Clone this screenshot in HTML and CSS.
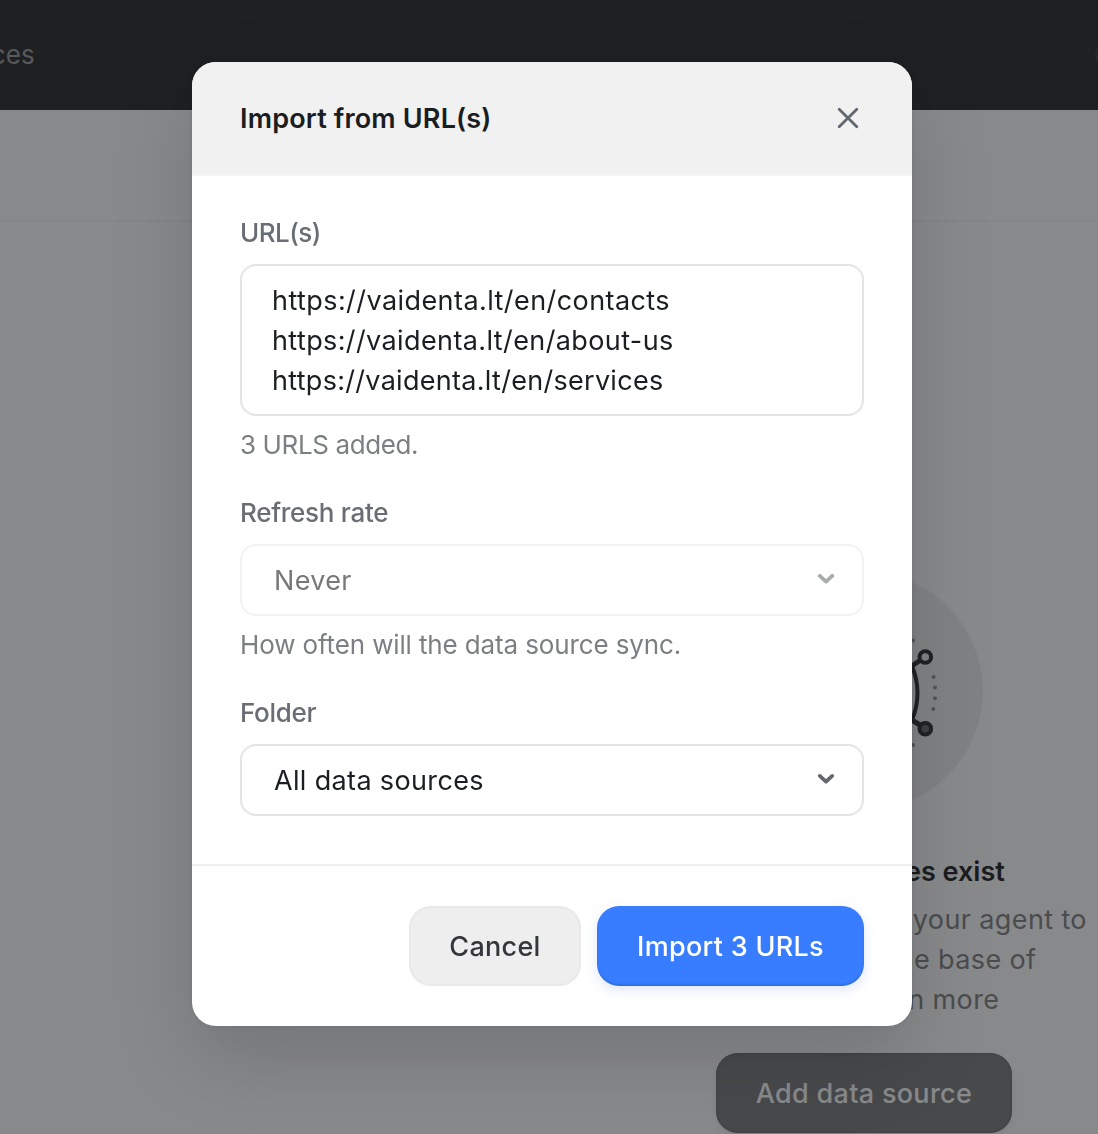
FILE: index.html
```html
<!DOCTYPE html>
<html lang="en">
<head>
    <meta charset="UTF-8">
    <title>Data sources</title>
    <link rel="stylesheet" href="styles.css">
</head>
<body>
    <div class="page">
        <header class="topbar">
            <a class="nav-link">Data sources</a>
            <span class="avatar"></span>
        </header>
        <div class="subheader"></div>
        <main class="empty-state">
            <div class="illustration">
                <svg width="238" height="238" viewBox="1 1 238 238" fill="none">
                    <path d="M168 95Q179 122 168 149" stroke="#25282c" stroke-width="4"/>
                    <path d="M167 95.5L176 89.5M167 148.5L176 154" stroke="#25282c" stroke-width="5"/>
                    <circle cx="181.3" cy="86" r="5.8" stroke="#25282c" stroke-width="4"/>
                    <circle cx="181.3" cy="157.8" r="5.8" fill="#696969" stroke="#25282c" stroke-width="4"/>
                    <g fill="#8a9795">
                        <circle cx="169" cy="69.6" r="2"/>
                        <circle cx="189.6" cy="106" r="2"/>
                        <circle cx="191" cy="116.6" r="2"/>
                        <circle cx="191" cy="127.3" r="2"/>
                        <circle cx="189.3" cy="138" r="2"/>
                        <circle cx="169" cy="174" r="2"/>
                    </g>
                </svg>
            </div>
            <h2>No data sources exist</h2>
            <p>Add data sources to your agent to<br>build a knowledge base of<br>material. Learn more</p>
            <button class="btn btn-dark">Add data source</button>
        </main>
    </div>

    <div class="backdrop">
        <div class="modal">
            <div class="modal-header">
                <h1>Import from URL(s)</h1>
                <svg class="close" width="24" height="24" viewBox="0 0 24 24" fill="none" stroke="#62686e" stroke-width="2.8" stroke-linecap="round">
                    <path d="M3.2 3.2L20.8 20.8M20.8 3.2L3.2 20.8"/>
                </svg>
            </div>
            <div class="modal-body">
                <div class="field">
                    <label class="label-urls">URL(s)</label>
                    <div class="textarea">
                        <div class="url-contacts">https://vaidenta.lt/en/contacts</div>
                        <div class="url-about">https://vaidenta.lt/en/about-us</div>
                        <div class="url-services">https://vaidenta.lt/en/services</div>
                    </div>
                    <div class="hint hint-count">3 URLS added.</div>
                </div>
                <div class="field">
                    <label>Refresh rate</label>
                    <div class="select disabled">
                        <span>Never</span>
                        <svg width="18" height="14" viewBox="0 0 18 14" fill="none" stroke="#62686e" stroke-width="3.8" stroke-linecap="round" stroke-linejoin="round">
                            <path d="M2.8 2.9L9 8.6L15.2 2.9"/>
                        </svg>
                    </div>
                    <div class="hint">How often will the data source sync.</div>
                </div>
                <div class="field">
                    <label>Folder</label>
                    <div class="select">
                        <span>All data sources</span>
                        <svg width="18" height="14" viewBox="0 0 18 14" fill="none" stroke="#62686e" stroke-width="3.8" stroke-linecap="round" stroke-linejoin="round">
                            <path d="M2.8 2.9L9 8.6L15.2 2.9"/>
                        </svg>
                    </div>
                </div>
            </div>
            <div class="modal-footer">
                <button class="btn btn-light">Cancel</button>
                <button class="btn btn-primary">Import 3 URLs</button>
            </div>
        </div>
    </div>
</body>
</html>
```

FILE: styles.css
```css
body {
    margin: 0;
    overflow: hidden;
    font-family: Inter, "Open Sans", sans-serif;
    font-size: 27px;
    line-height: 40px;
    color: #1a1d21;
}
h1, h2, p {
    margin: 0;
}
.page {
    height: 1134px;
    overflow: hidden;
    background: #fff;
}
.topbar {
    display: flex;
    align-items: center;
    justify-content: space-between;
    height: 110px;
    overflow: hidden;
    background: #242424;
}
.nav-link {
    margin-left: -128px;
    color: #999;
    font-size: 26px;
    letter-spacing: 0.1px;
}
.avatar {
    width: 48px;
    height: 24px;
    margin-right: -45px;
    border-radius: 12px;
    background: #333;
}
.subheader {
    height: 110px;
    border-bottom: 2px solid #f6f6f6;
}
.empty-state {
    display: flex;
    flex-direction: column;
    align-items: center;
    width: 468px;
    margin-left: 630px;
    padding-top: 350px;
    text-align: center;
}
.illustration {
    width: 238px;
    height: 238px;
    border-radius: 50%;
    background: #eeefef;
}
.empty-state h2 {
    margin-top: 42px;
    font-size: 27px;
    font-weight: 600;
}
.empty-state p {
    margin: 8px 0 33px;
    letter-spacing: 0.38px;
    color: #7e7f80;
    white-space: nowrap;
}
.backdrop {
    position: fixed;
    inset: 0;
    display: flex;
    align-items: flex-start;
    padding: 62px 0 0 192px;
    background: rgba(26, 29, 33, 0.52);
}
.modal {
    width: 720px;
    border-radius: 24px;
    overflow: hidden;
    background: #fff;
    box-shadow: 0 0 4px rgba(0, 0, 0, 0.1), 0 32px 80px rgba(0, 0, 0, 0.15);
}
.modal-header {
    display: flex;
    align-items: center;
    justify-content: space-between;
    height: 112px;
    padding: 0 52px 0 48px;
    background: #f1f1f1;
    border-bottom: 2px solid #f3f3f3;
}
.modal-header h1 {
    padding-top: 2px;
    font-size: 27px;
    font-weight: 600;
    letter-spacing: 0.17px;
}
.modal-body {
    display: flex;
    flex-direction: column;
    gap: 36px;
    padding: 41px 48px 48px;
}
.field {
    display: flex;
    flex-direction: column;
}
.field label {
    margin-bottom: 15px;
    font-size: 26px;
    font-weight: 500;
    line-height: 32px;
    letter-spacing: -0.28px;
    color: #686e74;
}
.field .label-urls {
    letter-spacing: -0.55px;
}
.textarea {
    padding: 15px 30px 13px;
    border: 2px solid #e4e4e5;
    border-radius: 16px;
}
.url-contacts {
    letter-spacing: 0.43px;
}
.url-about {
    letter-spacing: 0.39px;
}
.url-services {
    letter-spacing: 0.29px;
}
.hint {
    margin-top: 13px;
    font-size: 26px;
    line-height: 32px;
    letter-spacing: -0.13px;
    color: #7c7f82;
}
.hint-count {
    letter-spacing: -0.38px;
}
.select {
    display: flex;
    align-items: center;
    justify-content: space-between;
    height: 68px;
    padding: 0 27px 0 32px;
    border: 2px solid #e4e4e5;
    border-radius: 16px;
    letter-spacing: 0.35px;
}
.select span {
    padding-top: 2px;
}
.select.disabled {
    border-color: #f2f2f2;
    color: #76787b;
}
.select.disabled svg {
    opacity: 0.55;
}
.modal-footer {
    display: flex;
    justify-content: flex-end;
    gap: 16px;
    padding: 40px 48px;
    border-top: 2px solid #f0f0f0;
}
.btn {
    height: 80px;
    padding: 0;
    border: none;
    border-radius: 22px;
    font-family: inherit;
    font-size: 27px;
    font-weight: 500;
    letter-spacing: 0.3px;
}
.btn-light {
    width: 172px;
    background: #eee;
    box-shadow: inset 0 0 0 2px #e9e9e9;
    color: #33373c;
}
.btn-primary {
    width: 267px;
    background: #387dff;
    box-shadow: inset 0 -2px 2px rgba(0, 0, 0, 0.12), 0 4px 12px rgba(56, 100, 200, 0.16);
    color: #fff;
}
.btn-dark {
    width: 296px;
    background: #77797a;
    box-shadow: inset 0 0 2px 1px #6a6c6e, 0 4px 8px rgba(0, 0, 0, 0.08);
    color: #fff;
}
```
